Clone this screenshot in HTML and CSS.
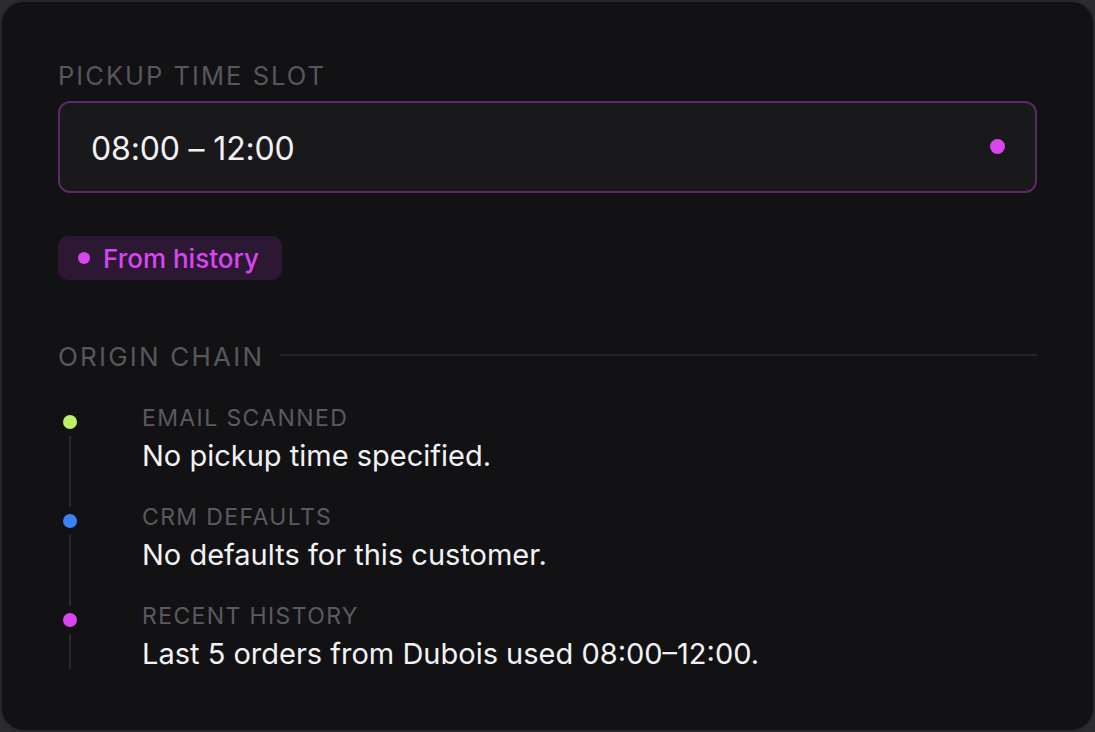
FILE: index.html
```html
<!DOCTYPE html>
<html lang="en">
<head>
<meta charset="utf-8">
<title>Pickup time slot</title>
<link rel="stylesheet" href="styles.css">
</head>
<body>
<div class="card">
  <div class="field-label">PICKUP TIME SLOT</div>
  <div class="input">
    <span class="input-value">08:00 – 12:00</span>
    <span class="dot dot-magenta dot-input"></span>
  </div>
  <div class="badge-row">
    <span class="badge"><span class="dot dot-magenta dot-badge"></span>From history</span>
  </div>
  <div class="section-head">
    <span class="section-title">ORIGIN CHAIN</span>
    <span class="section-rule"></span>
  </div>
  <div class="chain">
    <div class="step">
      <div class="rail"><span class="dot dot-step dot-lime"></span><span class="line"></span></div>
      <div class="step-body">
        <div class="step-label">EMAIL SCANNED</div>
        <div class="step-text">No pickup time specified.</div>
      </div>
    </div>
    <div class="step">
      <div class="rail"><span class="dot dot-step dot-blue"></span><span class="line"></span></div>
      <div class="step-body">
        <div class="step-label">CRM DEFAULTS</div>
        <div class="step-text">No defaults for this customer.</div>
      </div>
    </div>
    <div class="step">
      <div class="rail"><span class="dot dot-step dot-magenta"></span><span class="line"></span></div>
      <div class="step-body">
        <div class="step-label">RECENT HISTORY</div>
        <div class="step-text">Last 5 orders from Dubois used 08:00–12:00.</div>
      </div>
    </div>
  </div>
</div>
</body>
</html>
```

FILE: styles.css
```css
* { box-sizing: border-box; }
html, body {
  margin: 0;
  padding: 0;
  background: #2c2c30;
}
body {
  font-family: Inter, "Noto Sans", "Liberation Sans", sans-serif;
  width: 1095px;
  height: 732px;
  overflow: hidden;
}
.card {
  width: 1095px;
  height: 732px;
  background: #121214;
  border: 2px solid #27272a;
  border-radius: 24px;
  padding: 56px;
  display: flex;
  flex-direction: column;
}
.card > * { flex: none; }
.field-label {
  font-size: 25.5px;
  line-height: 32px;
  letter-spacing: 0.08em;
  color: #57575c;
  height: 34px;
  padding-top: 2px;
}
.input {
  margin-top: 9px;
  height: 92px;
  border: 2px solid #5b2a66;
  border-radius: 12px;
  background: #19191b;
  display: flex;
  align-items: center;
  justify-content: space-between;
  padding: 3px 30px 0 31px;
}
.input-value {
  font-size: 32px;
  color: #f2f2f4;
  letter-spacing: -0.005em;
}
.dot {
  display: inline-block;
  border-radius: 50%;
  flex: none;
}
.dot-magenta { background: #d946ef; }
.dot-lime { background: #bef264; }
.dot-blue { background: #3b82f6; }
.dot-input {
  width: 15px;
  height: 15px;
  margin-top: -5px;
}
.badge-row {
  margin-top: 43px;
  display: flex;
}
.badge {
  display: inline-flex;
  align-items: center;
  gap: 13px;
  height: 44px;
  padding: 0 23px 0 20px;
  background: #2d1833;
  border-radius: 10px;
  color: #d946ef;
  font-size: 26px;
  font-weight: 500;
}
.dot-badge {
  width: 12px;
  height: 12px;
}
.section-head {
  margin-top: 60px;
  display: flex;
  align-items: center;
  gap: 16px;
  height: 34px;
}
.section-title {
  font-size: 26px;
  letter-spacing: 0.085em;
  color: #57575c;
  line-height: 32px;
}
.section-rule {
  flex: 1;
  height: 2px;
  background: #232326;
  margin-top: -4px;
}
.chain {
  margin-top: 30px;
  display: flex;
  flex-direction: column;
}
.step {
  display: flex;
  gap: 60px;
  padding-bottom: 27px;
}
.step:last-child { padding-bottom: 0; }
.rail {
  width: 24px;
  display: flex;
  flex-direction: column;
  align-items: center;
}
.dot-step {
  width: 14px;
  height: 14px;
  margin-top: 11px;
}
.line {
  flex: 1;
  width: 2px;
  background: #2a2a2d;
  margin-top: 7px;
  margin-bottom: -31px;
}
.step:last-child .line { margin-bottom: 5px; }
.step-body {
  display: flex;
  flex-direction: column;
}
.step-label {
  font-size: 23px;
  line-height: 28px;
  letter-spacing: 0.06em;
  color: #5a5a60;
}
.step-text {
  margin-top: 4px;
  font-size: 29px;
  line-height: 40px;
  color: #f2f2f4;
}
```
